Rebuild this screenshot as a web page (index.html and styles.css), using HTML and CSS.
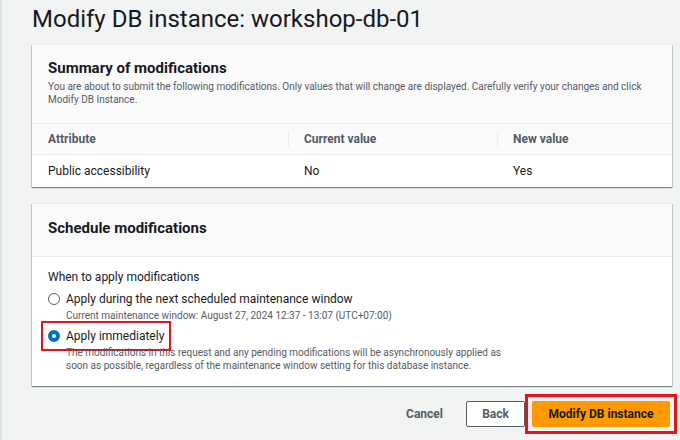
FILE: index.html
```html
<!DOCTYPE html>
<html lang="en">
<head>
<meta charset="utf-8">
<title>Modify DB instance</title>
<link rel="stylesheet" href="styles.css">
</head>
<body>
<div class="page">
  <h1 class="title">Modify DB instance: workshop-db-01</h1>

  <section class="card">
    <div class="card-header">
      <h2 class="card-title">Summary of modifications</h2>
      <p class="card-desc">You are about to submit the following modifications. Only values that will change are displayed. Carefully verify your changes and click<br>Modify DB Instance.</p>
    </div>
    <div class="table">
      <div class="row head">
        <div class="cell c1">Attribute</div>
        <div class="cell c2 div">Current value</div>
        <div class="cell c3 div">New value</div>
      </div>
      <div class="row body">
        <div class="cell c1">Public accessibility</div>
        <div class="cell c2">No</div>
        <div class="cell c3">Yes</div>
      </div>
    </div>
  </section>

  <section class="card card2">
    <div class="card-header h2">
      <h2 class="card-title">Schedule modifications</h2>
    </div>
    <div class="card-body">
      <div class="field-label">When to apply modifications</div>
      <div class="option">
        <div class="radio-line">
          <span class="radio"></span>
          <span class="opt-label">Apply during the next scheduled maintenance window</span>
        </div>
        <div class="opt-desc">Current maintenance window: August 27, 2024 12:37 - 13:07 (UTC+07:00)</div>
      </div>
      <div class="option">
        <div class="radio-line marked">
          <span class="radio checked"></span>
          <span class="opt-label">Apply immediately</span>
        </div>
        <div class="opt-desc">The modifications in this request and any pending modifications will be asynchronously applied as<br>soon as possible, regardless of the maintenance window setting for this database instance.</div>
      </div>
    </div>
  </section>

  <div class="actions">
    <button class="btn link">Cancel</button>
    <button class="btn normal">Back</button>
    <span class="primary-wrap marked"><button class="btn primary">Modify DB instance</button></span>
  </div>
</div>
</body>
</html>
```

FILE: styles.css
```css
* { box-sizing: border-box; }
html, body { margin: 0; padding: 0; }
body {
  background: #f2f3f3;
  font-family: Roboto, "Noto Sans", Arial, sans-serif;
  color: #16191f;
  width: 680px;
  height: 440px;
  overflow: hidden;
}
.page {
  border-left: 2px solid #dfe2e2;
  min-height: 440px;
  padding: 0 8px 0 30px;
}
.title {
  margin: 0;
  padding-top: 4px;
  font-size: 24px;
  line-height: 30px;
  font-weight: 400;
  color: #16191f;
  height: 44px;
}
.card {
  background: #fff;
  border-top: 1px solid #eaeded;
  box-shadow: 0 1px 1px 0 rgba(0,28,36,.3), 1px 1px 1px 0 rgba(0,28,36,.15), -1px 1px 1px 0 rgba(0,28,36,.15);
}
.card-header {
  background: #fafafa;
  padding: 13px 16px 17px;
}
.card-title {
  margin: 0;
  font-size: 15px;
  line-height: 20px;
  font-weight: 700;
  color: #16191f;
}
.card-desc {
  margin: 2px 0 0;
  font-size: 10px;
  line-height: 13px;
  color: #545b64;
  white-space: nowrap;
}
.table { font-size: 12px; }
.row { display: flex; }
.row.head {
  background: #fafafa;
  border-top: 1px solid #eaeded;
  border-bottom: 1px solid #eaeded;
  height: 32px;
  font-weight: 700;
  color: #545b64;
}
.row.body { height: 32px; color: #16191f; }
.cell {
  display: flex;
  align-items: center;
  padding-left: 16px;
  position: relative;
}
.c1 { width: 256px; }
.c2 { width: 209px; }
.c3 { flex: 1; }
.cell.div::before {
  content: "";
  position: absolute;
  left: 0;
  top: 7px;
  bottom: 7px;
  border-left: 1px solid #eaeded;
}
.card2 { margin-top: 16px; }
.card-header.h2 {
  padding: 14px 16px 18px;
  border-bottom: 1px solid #eaeded;
}
.card-body { padding: 12px 16px 14px; }
.field-label {
  font-size: 12px;
  line-height: 16px;
  color: #16191f;
  margin-bottom: 5px;
}
.option { margin-bottom: 5px; }
.option:last-child { margin-bottom: 0; }
.radio-line {
  display: inline-flex;
  align-items: center;
  height: 16px;
  font-size: 12px;
  color: #16191f;
}
.radio {
  width: 12px;
  height: 12px;
  border-radius: 50%;
  border: 1.5px solid #545b64;
  background: #fff;
  margin-right: 6px;
}
.radio.checked {
  border: 4px solid #0073bb;
}
.opt-desc {
  margin-left: 18px;
  font-size: 10px;
  line-height: 13px;
  color: #545b64;
}
.marked {
  outline: 2px solid #e3141d;
}
.radio-line.marked { outline-offset: 5px; }
.actions {
  display: flex;
  justify-content: flex-end;
  align-items: center;
  margin-top: 15px;
  padding-right: 2px;
}
.btn {
  font-family: inherit;
  font-size: 12px;
  font-weight: 700;
  height: 26px;
  border-radius: 2px;
  cursor: pointer;
}
.btn.link {
  background: none;
  border: none;
  color: #545b64;
  padding: 0;
  margin-right: 23px;
}
.btn.normal {
  background: #fff;
  border: 1px solid #545b64;
  color: #545b64;
  width: 59px;
  margin-right: 7px;
}
.primary-wrap {
  display: inline-flex;
  outline-width: 3px;
  outline-offset: 4px;
}
.btn.primary {
  background: #ff9900;
  border: 1px solid #ff9900;
  color: #16191f;
  width: 138px;
}
```
